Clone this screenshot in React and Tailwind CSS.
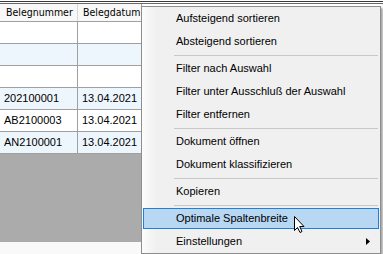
import React from "react";

const rows = [
  { a: "", b: "", alt: false },
  { a: "", b: "", alt: true },
  { a: "", b: "", alt: false },
  { a: "202100001", b: "13.04.2021", alt: true },
  { a: "AB2100003", b: "13.04.2021", alt: false },
  { a: "AN2100001", b: "13.04.2021", alt: true },
];

function Item({ label, hover, arrow }) {
  return (
    <div className="relative h-[23px] flex items-center">
      {hover && (
        <div className="absolute left-[1px] right-[1px] top-[1px] bottom-[1px] bg-[#b7d7f3] border border-[#2080d8]" />
      )}
      <span className="relative pl-[34px] text-[11px] text-black">{label}</span>
      {arrow && (
        <svg className="absolute right-[10px] top-[8px]" width="4" height="7" viewBox="0 0 4 7">
          <path d="M0 0 L4 3.5 L0 7 Z" fill="#000" />
        </svg>
      )}
    </div>
  );
}

function Sep() {
  return (
    <div className="h-[4px] flex items-center pl-[32px] pr-[2px]">
      <div className="h-px w-full bg-[#c8c8c8]" />
    </div>
  );
}

export default function App() {
  return (
    <div className="relative w-[383px] h-[254px] bg-white overflow-hidden font-['Liberation_Sans',sans-serif]">
      <div className="h-px mt-px bg-[#3a3a3a]" />
      <div className="h-px mt-px bg-[#6a6a6a]" />
      <div className="w-[142px] flex flex-col">
        <div className="flex h-[18px] border-b border-[#a0a0a0] bg-[#f8f8f8] text-[10.5px] text-black font-['DejaVu_Sans_Condensed','DejaVu_Sans',sans-serif]">
          <div className="w-[78px] border-r border-[#d8d8d8] pl-[6px] flex items-center">Belegnummer</div>
          <div className="w-[64px] border-r border-[#a0a0a0] pl-[5px] flex items-center">Belegdatum</div>
        </div>
        {rows.map((r, i) => (
          <div
            key={i}
            className={`flex h-[22px] border-b border-[#a0a0a0] text-[11px] text-black ${r.alt ? "bg-[#eef6fd]" : "bg-white"}`}
          >
            <div className="w-[78px] border-r border-[#a0a0a0] pl-[4px] flex items-center">{r.a}</div>
            <div className="w-[64px] border-r border-[#a0a0a0] pl-[4px] flex items-center">{r.b}</div>
          </div>
        ))}
        <div className="h-[88px] bg-[#ababab]" />
        <div className="h-[12px] bg-[#f9f9f9]" />
      </div>

      <div className="absolute left-[141px] top-[6px] w-[240px] h-[248px] border border-[#8e8e8e] bg-[linear-gradient(to_right,#fcfcfc,#f0f0f0_14px)] shadow-[2px_2px_2px_rgba(0,0,0,0.35)] font-['Liberation_Sans',sans-serif]">
        <Item label="Aufsteigend sortieren" />
        <Item label="Absteigend sortieren" />
        <Sep />
        <Item label="Filter nach Auswahl" />
        <Item label="Filter unter Ausschluß der Auswahl" />
        <Item label="Filter entfernen" />
        <Sep />
        <Item label="Dokument öffnen" />
        <Item label="Dokument klassifizieren" />
        <Sep />
        <Item label="Kopieren" />
        <Sep />
        <Item label="Optimale Spaltenbreite" hover />
        <Item label="Einstellungen" arrow />
      </div>

      <svg className="absolute left-[293px] top-[215px]" width="13" height="19" viewBox="0 0 13 19">
        <path d="M1.5 1.5 V15.5 L4.5 12.5 L7 17.5 L9 16.5 L6.7 11.5 H11 Z" fill="#fff" stroke="#000" strokeWidth="1" strokeLinejoin="miter" />
      </svg>
    </div>
  );
}
